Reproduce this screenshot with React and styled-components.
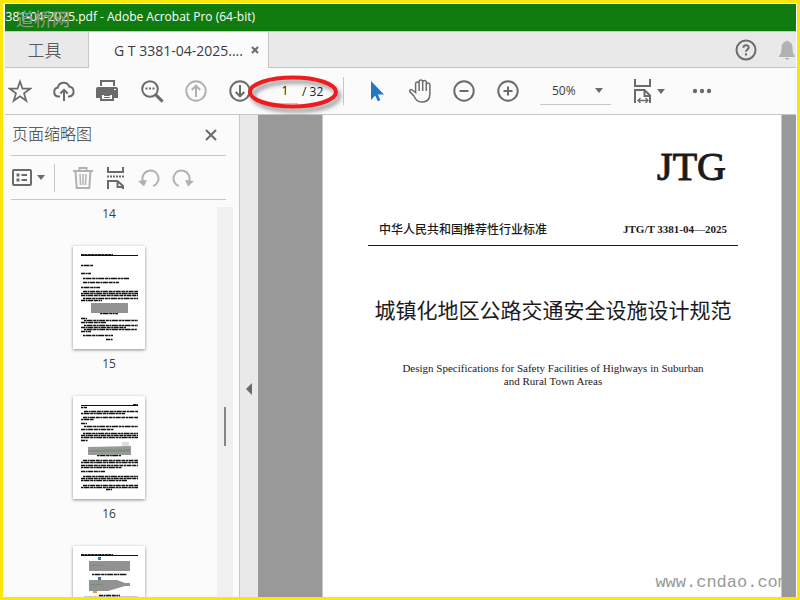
import React, { useState } from "react";
import styled, { createGlobalStyle, css } from "styled-components";

const thumbnails = [
  {
    label: "15",
    headerEnd: 40,
    rows: [
      [19, 8, 20], [27, 8, 18], [32, 10, 56], [36, 10, 46], [41, 8, 27],
      [45, 10, 65], [47, 8, 65], [49, 8, 65], [52, 10, 65], [54, 8, 29],
      [67, 27, 45], [72, 8, 14], [74, 11, 65], [76, 8, 33], [79, 11, 65],
      [81, 8, 53], [83, 11, 64], [85, 8, 18], [89, 10, 40], [93, 33, 40],
    ],
    figures: [{ points: "18,57 55,57 55,67 18,67", fill: "#929292" }],
  },
  {
    label: "16",
    headerStart: 60,
    headerEnd: 65,
    rows: [
      [11, 8, 14], [15, 11, 65], [17, 8, 52], [21, 10, 65], [23, 8, 21],
      [27, 8, 14], [30, 11, 65], [33, 8, 41], [37, 10, 65], [39, 8, 65],
      [41, 8, 65], [44, 8, 15], [59, 24, 48], [64, 10, 65], [66, 8, 65],
      [69, 8, 65], [71, 8, 49], [75, 8, 32], [80, 10, 65], [82, 8, 65],
      [84, 8, 54], [89, 10, 65], [91, 8, 65], [93, 33, 39],
    ],
    figures: [
      { points: "15,51 58,50 58,59 15,59", fill: "#999999" },
      { points: "16,54 57,53 57,56 16,56", fill: "#79967a" },
      { points: "49,46 56,46 56,50 49,50", fill: "#dddddd" },
    ],
  },
  {
    headerEnd: 40,
    rows: [[28, 19, 54], [49, 26, 47], [51, 11, 65], [57, 8, 60], [61, 8, 65]],
    figures: [
      { points: "16,15 57,15 57,25 16,25", fill: "#929292" },
      { points: "16,34 44,34 52,37 57,37 57,40 52,40 35,45 16,45", fill: "#929292" },
      { points: "17,19 32,19 32,20 17,20", fill: "#6d9570" },
      { points: "17,38 30,38 30,39 17,39", fill: "#6d9570" },
      { points: "25,11 28,11 28,14 25,14", fill: "#3b74a8" },
      { points: "25,31 28,31 28,34 25,34", fill: "#3b74a8" },
      { points: "20,45 24,45 24,47 20,47", fill: "#e39a26" },
    ],
  },
];

const Icon = ({ size = 24, width, height, children, fill = "none", ...rest }) => (
  <svg
    width={width || size}
    height={height || size}
    viewBox={`0 0 ${width || size} ${height || size}`}
    fill={fill}
    stroke="currentColor"
    strokeWidth="2"
    aria-hidden="true"
    {...rest}
  >
    {children}
  </svg>
);

const Caret = () => (
  <Icon width={8} height={5} fill="currentColor" stroke="none">
    <path d="M0 0h8L4 5z" />
  </Icon>
);

const StarIcon = () => (
  <Icon>
    <path d="M12 2.500l2.500 7.200h7.700l-6.200 4.700 2.300 7.400-6.300-4.500-6.300 4.500L8 14.400 1.800 9.700h7.700z" strokeWidth="1.700" />
  </Icon>
);

const CloudIcon = () => (
  <Icon>
    <path d="M8 17.500H6.500a4.500 4.500 0 0 1-.7-8.900A6 6 0 0 1 17.200 7.500a5.100 5.100 0 0 1 .5 10H16" />
    <path d="M12 22V11M8.300 14.500l3.700-3.700 3.700 3.700" />
  </Icon>
);

const PrintIcon = () => (
  <Icon fill="currentColor" stroke="none">
    <path d="M4 1h15v6h-2V3H6v4H4zM0 10a2 2 0 0 1 2-2h18a2 2 0 0 1 2 2v9h-4v-5H5v5H0z" />
    <path d="M5 15h12v6H5z" fill="#fbfbfb" stroke="currentColor" strokeWidth="2" />
    <path d="M8 16h6v1H8zM8 18h6v1H8z" />
    <path d="M18 10h2v1h-2z" fill="#fff" />
  </Icon>
);

const SearchIcon = () => (
  <Icon>
    <circle cx="10" cy="10" r="7.800" />
    <path d="M15.600 15.600l7 7" strokeWidth="3" />
    <path d="M5.500 9.500h2M9 9.500h2M12.500 9.500h2" />
  </Icon>
);

const CircleIcon = ({ d }) => (
  <Icon>
    <circle cx="12" cy="12" r="9.700" />
    <path d={d} />
  </Icon>
);

const CursorIcon = () => (
  <Icon fill="#2376c6" stroke="none">
    <path d="M7 2v19l4.200-4.500 2.600 5.700 2.600-1.300-2.600-5.400H20z" />
  </Icon>
);

const HandIcon = () => (
  <Icon>
    <path
      d="M7.600 13.500V4.700a1.700 1.700 0 0 1 3.500 0V12 2.700a1.700 1.700 0 0 1 3.600 0V12 3.400a1.700 1.700 0 0 1 3.600 0V12 5.700a1.700 1.700 0 0 1 3.600 0V15c0 5-3 8-8 8-4.500 0-6-2-8-6l-4-4.300c-.9-1.500.9-2.700 2.300-1.700z"
      strokeWidth="1.500"
    />
  </Icon>
);

const FitPageIcon = () => (
  <Icon width={18} height={24}>
    <path d="M1 0v7h15V0M1 24V11h9.500l5.500 5.500V24M10.500 11v6H16" />
    <path d="M4 21.500h10M6.500 19L4 21.500 6.500 24M11.500 19l2.500 2.500-2.500 2.500" strokeWidth="1.300" />
  </Icon>
);

const DotsIcon = () => (
  <Icon width={20} height={6} fill="currentColor" stroke="none">
    <circle cx="3" cy="3" r="2.200" />
    <circle cx="10" cy="3" r="2.200" />
    <circle cx="17" cy="3" r="2.200" />
  </Icon>
);

const HelpIcon = () => (
  <Icon>
    <circle cx="12" cy="12" r="9.500" />
    <path d="M9.400 9.700c0-3.200 5.300-3.200 5.300-.2 0 2-2.700 2-2.700 4.300M12 15.200v2.200" />
  </Icon>
);

const BellIcon = () => (
  <Icon width={18} height={24} fill="currentColor" stroke="none">
    <path d="M8 3.500C8 2 10 2 10 3.500c3 .7 4.500 2.800 4.500 6 0 4.500.5 6.500 2.500 8.500v1H1v-1c2-2 2.500-4 2.500-8.500 0-3.200 1.500-5.300 4.500-6zM6.500 20h5L9 22z" />
  </Icon>
);

const OptionsIcon = () => (
  <Icon width={20} height={18}>
    <rect x="1" y="1" width="18" height="15" rx="1" />
    <path d="M4.500 6h3M4.500 11h3" strokeWidth="3" />
    <path d="M9.500 6H15M9.500 11H15" />
  </Icon>
);

const TrashIcon = () => (
  <Icon width={20} height={22}>
    <path d="M0 4h20M6.500 4V1h7v3M2.500 4l1.200 17h12.600L17.500 4" />
    <path d="M7 7l.5 11M10 7v11M13 7l-.5 11" strokeWidth="1.500" />
  </Icon>
);

const ExtractIcon = () => (
  <Icon width={18} height={22}>
    <path d="M1 0v5h15V0M1 22v-8h9.500l5.500 5V22M10.500 14v6H17" />
    <path d="M0 9.500h18" strokeDasharray="2 1" />
  </Icon>
);

const RotateIcon = ({ flip }) => (
  <Icon width={22} height={20}>
    <g transform={flip ? "matrix(-1 0 0 1 22 0)" : undefined}>
      <path d="M5 13.300A8 8 0 1 1 15.200 18" />
      <path d="M0 13l9-1-3 6.500z" fill="currentColor" stroke="none" />
    </g>
  </Icon>
);

const Thumbnail = ({ page }) => (
  <svg width="72" height="103" viewBox="0 0 72 103" aria-hidden="true">
    <path d={`M${page.headerStart || 8} 8.500H${page.headerEnd}`} stroke="#222" strokeDasharray="3 .4" />
    <path d="M8 9.500H65" stroke="#111" />
    {page.rows.map(([y, x1, x2], i) => (
      <path
        key={y}
        d={`M${x1} ${y + 0.5}H${x2}`}
        stroke="#111"
        strokeWidth="1.600"
        strokeDasharray={i % 2 ? "4 .6 2 .5 5 .7" : "2 .5 6 .7 3 .5"}
      />
    ))}
    {page.figures.map((figure) => (
      <polygon key={figure.points} points={figure.points} fill={figure.fill} />
    ))}
  </svg>
);

const App = () => {
  const [pageNumber, setPageNumber] = useState("1");
  const [zoom, setZoom] = useState("50%");

  return (
    <>
      <GlobalStyle />
      <Window>
        <TitleBar>
          <Title>3381-04-2025.pdf - Adobe Acrobat Pro (64-bit)</Title>
          <SiteMark>道桥网</SiteMark>
        </TitleBar>
        <TabBar>
          <ToolsTab type="button">工具</ToolsTab>
          <FileTab>
            <span>G T 3381-04-2025....</span>
            <IconButton type="button" aria-label="Close tab" $width={10}>
              <Icon width={8} height={8}>
                <path d="M1 1l6 6M7 1L1 7" />
              </Icon>
            </IconButton>
          </FileTab>
          <TabActions>
            <IconButton type="button" aria-label="Help"><HelpIcon /></IconButton>
            <IconButton type="button" aria-label="Notifications" $width={18} $muted><BellIcon /></IconButton>
          </TabActions>
        </TabBar>
        <Toolbar>
          <IconButton type="button" aria-label="Star"><StarIcon /></IconButton>
          <IconButton type="button" aria-label="Share"><CloudIcon /></IconButton>
          <IconButton type="button" aria-label="Print"><PrintIcon /></IconButton>
          <IconButton type="button" aria-label="Find"><SearchIcon /></IconButton>
          <IconButton type="button" aria-label="Previous page" $muted>
            <CircleIcon d="M12 18V7M7.700 11L12 6.700l4.300 4.300" />
          </IconButton>
          <IconButton type="button" aria-label="Next page">
            <CircleIcon d="M12 6v11M7.700 13l4.300 4.300 4.300-4.300" />
          </IconButton>
          <PageGroup>
            <PageInput
              type="text"
              aria-label="Page number"
              value={pageNumber}
              onChange={(e) => setPageNumber(e.target.value)}
            />
            <span>/ 32</span>
            <RedCircle width="98" height="42" viewBox="0 0 98 42" aria-hidden="true">
              <ellipse cx="48" cy="20" rx="43" ry="14.500" fill="none" stroke="#ee1c1f" strokeWidth="4" />
            </RedCircle>
          </PageGroup>
          <Separator />
          <IconButton type="button" aria-label="Select"><CursorIcon /></IconButton>
          <IconButton type="button" aria-label="Pan"><HandIcon /></IconButton>
          <IconButton type="button" aria-label="Zoom out"><CircleIcon d="M7.500 12h9" /></IconButton>
          <IconButton type="button" aria-label="Zoom in"><CircleIcon d="M7.500 12h9M12 7.500v9" /></IconButton>
          <ZoomBox>
            <select aria-label="Zoom" value={zoom} onChange={(e) => setZoom(e.target.value)}>
              <option>50%</option>
              <option>75%</option>
              <option>100%</option>
            </select>
            <Caret />
          </ZoomBox>
          <IconButton type="button" aria-label="Fit page" $width={36}>
            <FitPageIcon />
            <Caret />
          </IconButton>
          <IconButton type="button" aria-label="More tools" $width={30}><DotsIcon /></IconButton>
        </Toolbar>
        <Main>
          <Sidebar>
            <SidebarHeader>
              <h2>页面缩略图</h2>
              <IconButton type="button" aria-label="Close panel" $width={14}>
                <Icon width={14} height={14}>
                  <path d="M2 2l10 10M12 2L2 12" />
                </Icon>
              </IconButton>
            </SidebarHeader>
            <SidebarTools>
              <IconButton type="button" aria-label="Options" $width={34}>
                <OptionsIcon />
                <Caret />
              </IconButton>
              <Separator />
              <PageTools>
                <IconButton type="button" aria-label="Delete pages" $width={20} $muted><TrashIcon /></IconButton>
                <IconButton type="button" aria-label="Extract pages" $width={18}><ExtractIcon /></IconButton>
                <IconButton type="button" aria-label="Rotate left" $width={20} $muted><RotateIcon /></IconButton>
                <IconButton type="button" aria-label="Rotate right" $width={20} $muted><RotateIcon flip /></IconButton>
              </PageTools>
            </SidebarTools>
            <ThumbArea>
              <ThumbList>
                <PageLabel>14</PageLabel>
                {thumbnails.map((page, i) => (
                  <React.Fragment key={i}>
                    <ThumbButton type="button" aria-label={`Page ${15 + i}`}>
                      <Thumbnail page={page} />
                    </ThumbButton>
                    {page.label && <PageLabel>{page.label}</PageLabel>}
                  </React.Fragment>
                ))}
              </ThumbList>
              <ScrollTrack>
                <ScrollThumb />
              </ScrollTrack>
            </ThumbArea>
          </Sidebar>
          <CollapseBar type="button" aria-label="Collapse panel">
            <Icon width={6} height={12} fill="currentColor" stroke="none">
              <path d="M6 0v12L0 6z" />
            </Icon>
          </CollapseBar>
          <Viewer>
            <Paper>
              <Mark>JTG</Mark>
              <StandardRow>
                <span>中华人民共和国推荐性行业标准</span>
                <StandardCode>JTG/T 3381-04—2025</StandardCode>
              </StandardRow>
              <DocTitle>城镇化地区公路交通安全设施设计规范</DocTitle>
              <DocSubtitle>
                Design Specifications for Safety Facilities of Highways in Suburban
                <br />
                and Rural Town Areas
              </DocSubtitle>
            </Paper>
            <Watermark>www.cndao.com</Watermark>
          </Viewer>
        </Main>
      </Window>
    </>
  );
};

export default App;

const GlobalStyle = createGlobalStyle`
  * {
    box-sizing: border-box;
  }
  body {
    margin: 0;
    overflow: hidden;
    font-family: "Open Sans", "Noto Sans CJK SC", sans-serif;
    font-size: 12px;
    color: #3b3b3b;
  }
  button, input, select {
    margin: 0;
    padding: 0;
    border: 0;
    background: none;
    font: inherit;
    color: inherit;
  }
  svg {
    display: block;
    flex: none;
  }
`;

const Window = styled.div`
  display: flex;
  flex-direction: column;
  height: 100vh;
  padding: 1px 1px 0 2px;
  border: 3px solid #fae60a;
  background-color: #ffffff;
`;

const TitleBar = styled.header`
  position: relative;
  display: flex;
  align-items: center;
  flex: none;
  height: 27px;
  overflow: hidden;
  background-color: #107c10;
`;

const Title = styled.h1`
  display: flex;
  justify-content: flex-end;
  width: 250px;
  margin: 0 0 2px;
  font-size: 12px;
  font-weight: 400;
  line-height: 18px;
  white-space: nowrap;
  color: #ffffff;
`;

const SiteMark = styled.span`
  position: absolute;
  top: 5px;
  left: 11px;
  font-family: "Liberation Serif", "Noto Sans CJK SC", serif;
  font-size: 18px;
  line-height: 22px;
  color: #8f9c8f;
`;

const TabBar = styled.nav`
  display: flex;
  flex: none;
  height: 37px;
  border-top: 1px solid #c6c6c6;
  background-color: #e9e9e9;
`;

const ToolsTab = styled.button`
  width: 84px;
  padding-right: 4px;
  border-right: 1px solid #c6c6c6;
  border-bottom: 1px solid #c6c6c6;
  font-size: 17px;
  font-weight: 300;
`;

const FileTab = styled.div`
  display: flex;
  align-items: center;
  justify-content: space-between;
  width: 180px;
  padding: 0 8px 0 25px;
  border-right: 1px solid #c6c6c6;
  background-color: #fbfbfb;
  font-size: 14px;
  white-space: nowrap;
`;

const TabActions = styled.div`
  display: flex;
  align-items: center;
  justify-content: flex-end;
  gap: 20px;
  flex: 1;
  border-bottom: 1px solid #c6c6c6;
`;

const IconButton = styled.button`
  display: flex;
  align-items: center;
  justify-content: center;
  gap: 5px;
  flex: none;
  width: ${({ $width }) => $width || 24}px;
  color: ${({ $muted }) => ($muted ? "#b1b1b1" : "#6b6b6b")};
`;

const Toolbar = styled.div`
  display: flex;
  align-items: center;
  gap: 20px;
  flex: none;
  height: 47px;
  padding-left: 3px;
  border-bottom: 1px solid #c6c6c6;
  background-color: #fbfbfb;
`;

const Separator = styled.span`
  flex: none;
  width: 1px;
  height: 28px;
  background-color: #c6c6c6;
`;

const PageGroup = styled.div`
  position: relative;
  display: flex;
  align-items: center;
  gap: 4px;
  width: 51px;
  color: #222222;
  white-space: nowrap;
`;

const PageInput = styled.input`
  width: 26px;
  height: 26px;
  border-bottom: 1px solid #c6c6c6;
  text-align: center;
`;

/* hand-drawn highlight round the page counter */
const RedCircle = styled.svg`
  position: absolute;
  top: -6px;
  left: -27px;
  pointer-events: none;
  filter: drop-shadow(3px 4px 2px rgba(0, 0, 0, 0.4));
`;

const ZoomBox = styled.div`
  display: grid;
  align-items: center;
  width: 71px;
  height: 27px;
  border-bottom: 1px solid #c6c6c6;
  select {
    grid-area: 1 / 1;
    width: 100%;
    height: 26px;
    padding-left: 12px;
    appearance: none;
  }
  svg {
    grid-area: 1 / 1;
    justify-self: end;
    margin-right: 8px;
    color: #6b6b6b;
    pointer-events: none;
  }
`;

const Main = styled.main`
  display: flex;
  flex: 1;
  min-height: 0;
`;

const Sidebar = styled.aside`
  display: flex;
  flex-direction: column;
  flex: none;
  width: 235px;
  border-right: 1px solid #c6c6c6;
  background-color: #fbfbfb;
`;

const sidebarBar = css`
  display: flex;
  align-items: center;
  flex: none;
  margin: 0 13px 0 6px;
  border-bottom: 1px solid #c6c6c6;
`;

const SidebarHeader = styled.div`
  ${sidebarBar}
  justify-content: space-between;
  height: 41px;
  padding: 0 8px 0 1px;
  h2 {
    margin: 0 0 2px;
    font-size: 16px;
    font-weight: 300;
    line-height: 24px;
  }
`;

const SidebarTools = styled.div`
  ${sidebarBar}
  gap: 9px;
  height: 44px;
`;

const PageTools = styled.div`
  display: flex;
  align-items: center;
  gap: 14px;
  margin-left: 9px;
`;

const ThumbArea = styled.div`
  display: flex;
  flex: 1;
  gap: 4px;
  min-height: 0;
  padding: 7px 6px 0 0;
`;

const ThumbList = styled.div`
  display: flex;
  flex-direction: column;
  align-items: center;
  width: 208px;
  margin-top: -2px;
  overflow: hidden;
`;

const PageLabel = styled.span`
  flex: none;
  height: 41px;
  line-height: 18px;
`;

const ThumbButton = styled.button`
  flex: none;
  height: 103px;
  margin-bottom: 6px;
  background-color: #ffffff;
  box-shadow: 0 1px 3px rgba(0, 0, 0, 0.45);
`;

const ScrollTrack = styled.div`
  display: flex;
  justify-content: center;
  width: 16px;
  padding-top: 200px;
  background-color: #f0f0f0;
`;

const ScrollThumb = styled.div`
  width: 2px;
  height: 39px;
  background-color: #868686;
`;

const CollapseBar = styled.button`
  display: flex;
  align-items: center;
  justify-content: center;
  flex: none;
  width: 18px;
  padding-top: 66px;
  background-color: #e9e9e9;
  color: #6b6b6b;
`;

const Viewer = styled.section`
  position: relative;
  flex: 1;
  min-width: 0;
  padding: 0 14px 0 64px;
  overflow: hidden;
  background-color: #999999;
`;

const Paper = styled.article`
  height: 100%;
  padding: 28px 43px 0 45px;
  border: solid #c6c6c6;
  border-width: 0 1px;
  background-color: #ffffff;
  font-family: "Liberation Serif", "Noto Sans CJK SC", serif;
  color: #1c1a1b;
`;

const Mark = styled.div`
  padding-right: 12px;
  font-size: 40px;
  line-height: 48px;
  text-align: right;
  -webkit-text-stroke: 1px #1c1a1b;
`;

const StandardRow = styled.div`
  display: flex;
  align-items: center;
  justify-content: space-between;
  height: 55px;
  padding: 22px 11px 0;
  border-bottom: 1px solid #1c1a1b;
  font-size: 12px;
  font-weight: 500;
  white-space: nowrap;
`;

const StandardCode = styled.span`
  font-size: 11px;
  font-weight: 700;
`;

const DocTitle = styled.h2`
  margin: 49px 0 35px;
  font-size: 21px;
  font-weight: 400;
  line-height: 32px;
  text-align: center;
  white-space: nowrap;
`;

const DocSubtitle = styled.p`
  margin: 0;
  font-size: 11px;
  line-height: 13px;
  text-align: center;
`;

const Watermark = styled.span`
  position: absolute;
  right: 8px;
  bottom: 2px;
  font-family: "Liberation Mono", monospace;
  font-size: 17px;
  line-height: 24px;
  color: #999999;
`;
